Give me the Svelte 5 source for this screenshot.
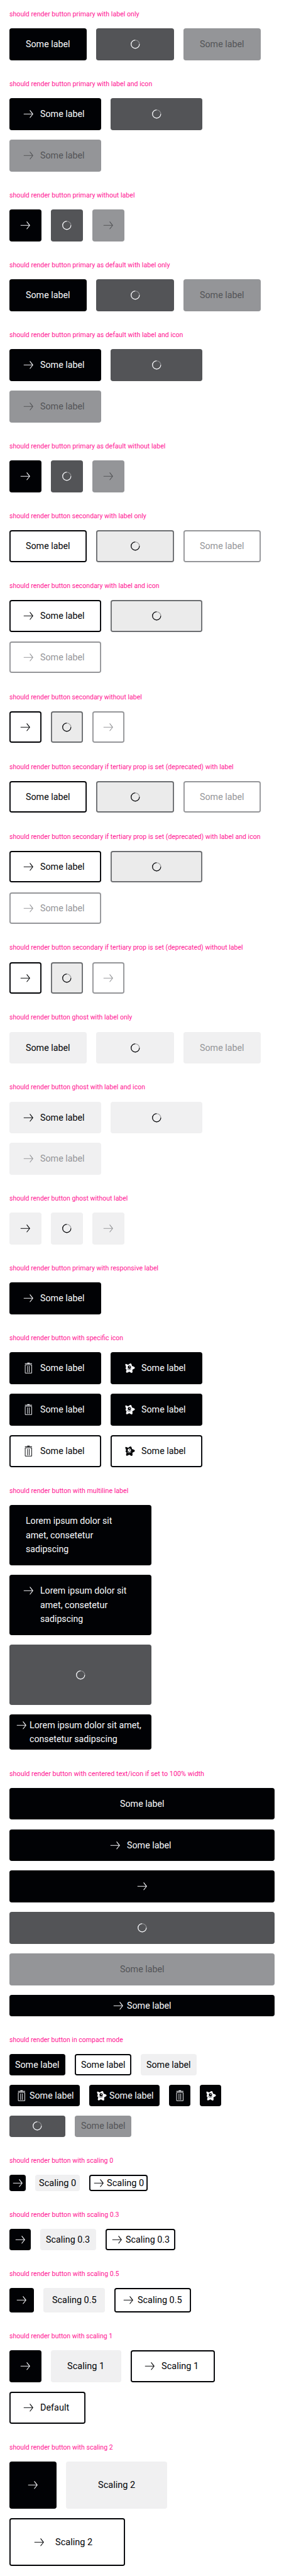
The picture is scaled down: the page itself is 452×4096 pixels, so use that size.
<script>
  const S = (extra = {}) => ({ text: 'Some label', w: 75, ...extra });
  const A = 'arrow';

  const labelOnly = (v) => [[{ v, ...S() }, { v, ...S(), loading: true }, { v, ...S(), disabled: true }]];
  const withIcon = (v) => [
    [{ v, icon: A, ...S() }, { v, icon: A, ...S(), loading: true }],
    [{ v, icon: A, ...S(), disabled: true }]
  ];
  const iconOnly = (v) => [[{ v, icon: A }, { v, icon: A, loading: true }, { v, icon: A, disabled: true }]];
  const scaled = (size, text, w) => [
    { v: 'primary', icon: A, size },
    { v: 'ghost', text, w, size },
    { v: 'secondary', icon: A, text, w, size }
  ];

  const p = 'primary';
  const s = 'secondary';
  const line1 = { t: 'Lorem ipsum dolor sit', w: 146 };
  const line2 = { t: 'amet, consetetur', w: 114 };
  const line3 = { t: 'sadipscing', w: 72.5 };
  const compact1 = { t: 'Lorem ipsum dolor sit amet,', w: 189 };
  const compact2 = { t: 'consetetur sadipscing', w: 148.5 };
  const s1 = scaled('s1', 'Scaling 1', 63);
  const s2 = scaled('s2', 'Scaling 2', 63);

  const sections = [
    ['should render button primary with label only', 219.5, labelOnly(p)],
    ['should render button primary with label and icon', 241.5, withIcon(p)],
    ['should render button primary without label', 212, iconOnly(p)],
    ['should render button primary as default with label only', 271.5, labelOnly(p)],
    ['should render button primary as default with label and icon', 293.8, withIcon(p)],
    ['should render button primary as default without label', 264, iconOnly(p)],
    ['should render button secondary with label only', 231.5, labelOnly(s)],
    ['should render button secondary with label and icon', 253.5, withIcon(s)],
    ['should render button secondary without label', 224, iconOnly(s)],
    ['should render button secondary if tertiary prop is set (deprecated) with label', 379, labelOnly(s)],
    ['should render button secondary if tertiary prop is set (deprecated) with label and icon', 424.7, withIcon(s)],
    ['should render button secondary if tertiary prop is set (deprecated) without label', 395, iconOnly(s)],
    ['should render button ghost with label only', 207.5, labelOnly('ghost')],
    ['should render button ghost with label and icon', 229.5, withIcon('ghost')],
    ['should render button ghost without label', 200.2, iconOnly('ghost')],
    ['should render button primary with responsive label', 252, [[{ v: p, icon: A, ...S() }]]],
    ['should render button with specific icon', 192.5, [p, p, s].map((v) => [
      { v, icon: 'trash', ...S() },
      { v, icon: 'star', ...S() }
    ])],
    ['should render button with multiline label', 201.2, [
      [{ v: p, lines: [line1, line2, line3], wide: true }],
      [{ v: p, icon: A, lines: [line1, line2, line3], wide: true }],
      [{ v: p, icon: A, lines: [line1, line2, line3], wide: true, loading: true }],
      [{ v: p, icon: A, lines: [compact1, compact2], wide: true, size: 'compact' }]
    ]],
    ['should render button with centered text/icon if set to 100% width', 329.5, [
      [{ v: p, ...S(), full: true }],
      [{ v: p, icon: A, ...S(), full: true }],
      [{ v: p, icon: A, full: true }],
      [{ v: p, icon: A, full: true, loading: true }],
      [{ v: p, ...S(), full: true, disabled: true }],
      [{ v: p, icon: A, ...S(), full: true, size: 'compact' }]
    ]],
    ['should render button in compact mode', 192.2, [
      [p, s, 'ghost'].map((v) => ({ v, ...S(), size: 'compact' })),
      [
        { v: p, icon: 'trash', ...S(), size: 'compact' },
        { v: p, icon: 'star', ...S(), size: 'compact' },
        { v: p, icon: 'trash', size: 'compact' },
        { v: p, icon: 'star', size: 'compact' }
      ],
      [{ v: p, ...S(), size: 'compact', loading: true }, { v: p, ...S(), size: 'compact', disabled: true }]
    ]],
    ['should render button with scaling 0', 175.5, [scaled('s0', 'Scaling 0', 63)]],
    ['should render button with scaling 0.3', 185.5, [scaled('compact', 'Scaling 0.3', 74.5)]],
    ['should render button with scaling 0.5', 185.5, [scaled('s05', 'Scaling 0.5', 75)]],
    ['should render button with scaling 1', 174.5, [
      s1,
      [{ v: s, icon: A, text: 'Default', w: 49 }]
    ]],
    ['should render button with scaling 2', 175, [s2.slice(0, 2), s2.slice(2)]]
  ];

  function fit(node) {
    const inner = node.firstElementChild;
    const natural = inner.getBoundingClientRect().width;
    const target = node.getBoundingClientRect().width;
    inner.style.transform = `scaleX(${target / natural})`;
  }
</script>

{#snippet fitted(text, w)}
  <span class="fit" style="width: {w}px" use:fit><span class="glyphs">{text}</span></span>
{/snippet}

{#snippet glyph(name)}
  <svg class="icon" viewBox="0 0 24 24" aria-hidden="true">
    {#if name === 'arrow'}
      <path d="M4 11.5h15v1H4z" fill="currentColor" />
      <path d="M14.4 5.7 19.4 12l-5 6.3" fill="none" stroke="currentColor" stroke-width="1.15" />
    {:else if name === 'trash'}
      <path d="M10 3h4v1h4v1H6V4h4z" fill="currentColor" />
      <path d="M6.5 6.5h11v14h-11zM10.5 8.500v10.500M13.500 8.500v10.500" fill="none" stroke="currentColor" />
    {:else}
      <path
        fill="currentColor"
        fill-rule="evenodd"
        d="M4.900 5.200C6.300 4.700 8 5.800 9.500 6.600 11 5.300 12.600 4 14 4.300c1.300.4 1.600 2.700 2 4.200 2 .5 4.500 1.500 4.900 2.900.3 1.300-2.500 2.400-4.300 3.400.3 1.900.8 4.300-.4 5.100-1.200.7-3-.7-4.700-1.800-1.500 1-3.600 2.200-4.900 1.500-1.200-.7-.3-3 .3-4.700C5.700 13.700 4.900 12.900 5.300 12c.3-.7.8-1 .7-1.800C5.700 8.500 4 6 4.900 5.200zM11.600 7.700a2.800 2.900 0 1 0 .01 0z"
      />
      <circle cx="12.200" cy="9.900" r=".9" fill="currentColor" />
      <path d="M7.700 13.200q3.300 3.400 7 .2" fill="none" stroke="var(--bg)" stroke-width=".7" />
    {/if}
  </svg>
{/snippet}

<main>
  {#each sections as [title, width, rows]}
    <section>
      <h2>{@render fitted(title, width)}</h2>
      <div class="rows">
        {#each rows as row}
          <div class="row">
            {#each row as b}
              <button
                type="button"
                class="btn {b.v} {b.size ?? 's1'}"
                class:has-icon={b.icon}
                class:bare={!b.text && !b.lines}
                class:wide={b.wide}
                class:full={b.full}
                class:loading={b.loading}
                disabled={b.disabled}
              >
                {#if b.icon}{@render glyph(b.icon)}{/if}
                {#if b.text}
                  <span class="label">{@render fitted(b.text, b.w)}</span>
                {:else if b.lines}
                  <span class="label">
                    {#each b.lines as l}{@render fitted(l.t, l.w)}{/each}
                  </span>
                {/if}
                {#if b.loading}
                  <svg class="spinner" viewBox="0 0 24 24" aria-hidden="true">
                    <circle cx="12" cy="12" r="7" opacity=".35" />
                    <path d="M19 12a7 7 0 1 1-7-7" />
                  </svg>
                {/if}
              </button>
            {/each}
          </div>
        {/each}
      </div>
    </section>
  {/each}
</main>

<style>
  :global(body) {
    background: #fff;
  }

  main {
    box-sizing: border-box;
    width: 480px;
    padding: 16px;
    display: flex;
    flex-direction: column;
    gap: 32px;
    zoom: 0.941;
    font-family: Roboto, 'Liberation Sans', sans-serif;
  }

  h2 {
    margin: 0 0 16px;
    height: 16px;
    font-size: 12px;
    line-height: 16px;
    font-weight: 400;
    color: #ff1493;
  }

  .fit {
    display: block;
    white-space: nowrap;
  }

  .glyphs {
    display: inline-block;
    transform-origin: 0 50%;
  }

  .rows {
    display: flex;
    flex-direction: column;
    gap: 16px;
  }

  .row {
    display: flex;
    gap: 16px;
  }

  .btn {
    --py: 15px;
    --px: 28px;
    --pi: 20px;
    --gap: 8px;
    --bg: #010205;
    position: relative;
    display: flex;
    align-items: flex-start;
    justify-content: flex-start;
    box-sizing: border-box;
    margin: 0;
    border: 0;
    border-radius: 4px;
    padding: var(--py) var(--px);
    background: var(--bg);
    color: #fbfcff;
    font: inherit;
    font-size: 16.3px;
    line-height: 24px;
    text-align: left;
  }

  .s0 {
    --py: 2px;
    --px: 6px;
    --pi: 4px;
    --gap: 2px;
  }

  .compact {
    --py: 6px;
    --px: 10px;
    --pi: 8px;
    --gap: 2px;
  }

  .s05 {
    --py: 8.5px;
    --px: 15px;
    --pi: 11px;
    --gap: 4px;
  }

  .s2 {
    --py: 28px;
    --px: 54px;
    --pi: 38px;
    --gap: 16px;
  }

  .has-icon {
    padding-left: var(--pi);
    gap: var(--gap);
  }

  .bare {
    padding: var(--py);
  }

  .wide {
    width: 240px;
  }

  .full {
    width: 100%;
    justify-content: center;
  }

  .label {
    flex: none;
    transform: translateY(0.5px);
  }

  .icon {
    flex: none;
    width: 24px;
    height: 24px;
  }

  .secondary {
    --bg: #fff;
    color: #010205;
    box-shadow: inset 0 0 0 2px #010205;
  }

  .ghost {
    --bg: #f0f0f1;
    color: #010205;
  }

  .primary:disabled {
    --bg: #949598;
    color: #535457;
  }

  .secondary:disabled {
    color: #949598;
    box-shadow: inset 0 0 0 2px #949598;
  }

  .ghost:disabled {
    color: #949598;
  }

  .loading .label,
  .loading .icon {
    visibility: hidden;
  }

  .primary.loading {
    --bg: #535457;
  }

  .secondary.loading {
    --bg: #ebebeb;
    box-shadow: inset 0 0 0 2px #6b6d70;
  }

  .spinner {
    position: absolute;
    inset: 0;
    margin: auto;
    width: 24px;
    height: 24px;
    fill: none;
    stroke: currentColor;
    stroke-width: 1.2;
  }
</style>
